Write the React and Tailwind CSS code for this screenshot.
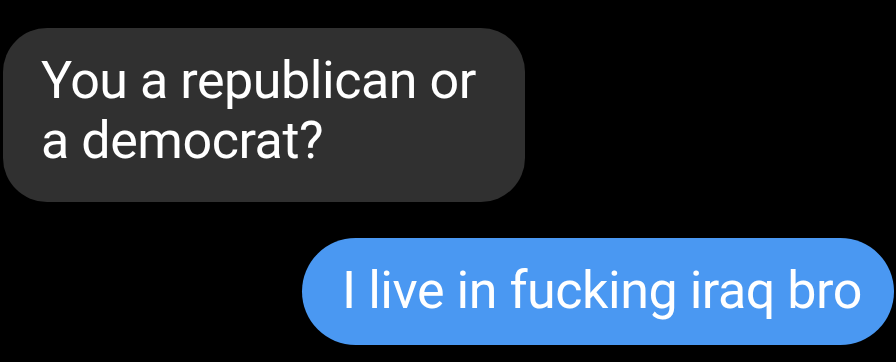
export default function App() {
  return (
    <div className="w-[896px] h-[362px] bg-black flex flex-col overflow-hidden" style={{ fontFamily: 'Roboto, "Noto Sans", sans-serif' }}>
      <div className="mt-[28px] ml-[3px] w-[522px] bg-[#303030] rounded-[44px] pl-[38px] pr-[20px] pt-[23px] pb-[31px] text-white text-[52px] leading-[60px] tracking-[-0.45px] whitespace-nowrap">
        You a republican or<br />a democrat?
      </div>
      <div className="mt-[36px] self-end mr-[2px] h-[107px] bg-[#4a98f2] rounded-full pl-[40px] pr-[32px] pt-[23px] text-white text-[52px] leading-[60px] tracking-[-0.45px] whitespace-nowrap">
        I live in fucking iraq bro
      </div>
    </div>
  );
}
